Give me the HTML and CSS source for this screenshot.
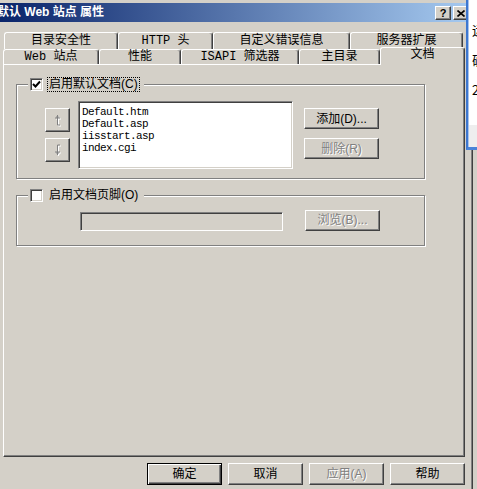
FILE: index.html
```html
<html>
    <head>
        <title>默认 Web 站点 属性</title>
        <link rel="stylesheet" href="styles.css">
    </head>
    <body>
        <div class="top-strip"></div>

        <div class="dialog">
            <div class="titlebar">
                <span class="title">默认 Web 站点 属性</span>
                <div class="caption-btns">
                    <span class="cap-btn">?</span>
                    <span class="cap-btn">
                        <svg width="8" height="7" viewBox="0 0 8 7"><path d="M0.5 0.5 L7.5 6.5 M7.5 0.5 L0.5 6.5" stroke="#000" stroke-width="1.6"/></svg>
                    </span>
                </div>
            </div>

            <div class="tabs">
                <div class="tab-row back">
                    <div class="tab w1">目录安全性</div>
                    <div class="tab w2">HTTP 头</div>
                    <div class="tab w3">自定义错误信息</div>
                    <div class="tab w4">服务器扩展</div>
                </div>
                <div class="tab-row front">
                    <div class="tab w5">Web 站点</div>
                    <div class="tab w6">性能</div>
                    <div class="tab w7">ISAPI 筛选器</div>
                    <div class="tab w8">主目录</div>
                    <div class="tab selected">文档</div>
                </div>
            </div>

            <div class="panel">
                <div class="group g1">
                    <div class="legend">
                        <span class="check">
                            <svg width="9" height="9" viewBox="0 0 9 9"><path d="M1 4 L3.5 6.5 L8 1.5" fill="none" stroke="#000" stroke-width="2"/></svg>
                        </span>
                        <span class="focus">启用默认文档(C)</span>
                    </div>
                    <div class="g1-body">
                        <div class="arrows">
                            <button class="btn arrow">
                                <svg width="9" height="13" viewBox="0 0 9 13">
                                    <path d="M4.5 1 V11 H7 M2 4 H7 M3 3 H6" fill="none" stroke="#fff" stroke-width="1" transform="translate(1 1)"/>
                                    <path d="M4.5 1 V11 H7 M2 4 H7 M3 3 H6" fill="none" stroke="#808080" stroke-width="1"/>
                                </svg>
                            </button>
                            <button class="btn arrow">
                                <svg width="9" height="13" viewBox="0 0 9 13">
                                    <path d="M4.5 11 V1 H7 M2 8 H7 M3 9 H6" fill="none" stroke="#fff" stroke-width="1" transform="translate(1 1)"/>
                                    <path d="M4.5 11 V1 H7 M2 8 H7 M3 9 H6" fill="none" stroke="#808080" stroke-width="1"/>
                                </svg>
                            </button>
                        </div>
                        <div class="listbox">
                            <div class="item">Default.htm</div>
                            <div class="item">Default.asp</div>
                            <div class="item">iisstart.asp</div>
                            <div class="item">index.cgi</div>
                        </div>
                        <div class="side-btns">
                            <button class="btn">添加(D)...</button>
                            <button class="btn disabled">删除(R)</button>
                        </div>
                    </div>
                </div>

                <div class="group g2">
                    <div class="legend">
                        <span class="check"></span>
                        <span class="label">启用文档页脚(O)</span>
                    </div>
                    <div class="g2-body">
                        <div class="textfield"></div>
                        <button class="btn disabled">浏览(B)...</button>
                    </div>
                </div>
            </div>

            <div class="footer">
                <button class="btn default">确定</button>
                <button class="btn">取消</button>
                <button class="btn disabled">应用(A)</button>
                <button class="btn">帮助</button>
            </div>
        </div>

        <div class="other-win">
            <div class="other-body">
                <div class="other-line">运</div>
                <div class="other-line">确</div>
                <div class="other-line">2</div>
            </div>
            <div class="other-bar"></div>
        </div>
    </body>
</html>
```

FILE: styles.css
```css
body {
    margin: 0;
    background-color: #d4d0c8;
    font-family: "Liberation Sans", "Noto Sans CJK SC", sans-serif;
    font-size: 12px;
    color: #000;
    position: relative;
    overflow: hidden;
    height: 489px;
}

.top-strip {
    height: 3px;
    background-color: #d4d0c8;
    border-bottom: 0;
}

.dialog {
    width: 473px;
    box-sizing: border-box;
    border-right: 1px solid #404040;
    box-shadow: inset -1px 0 #808080;
    height: 486px;
}

.titlebar {
    height: 19px;
    width: 470px;
    display: flex;
    align-items: center;
    justify-content: space-between;
    background: linear-gradient(to right, #0a246a, #a6caf0);
    padding-right: 1px;
    box-sizing: border-box;
}

.title {
    color: #fff;
    font-weight: bold;
    font-size: 12px;
    margin-left: -3px;
    white-space: nowrap;
    line-height: 19px;
}

.caption-btns {
    display: flex;
    gap: 2px;
    margin-top: 1px;
}

.cap-btn {
    width: 16px;
    height: 14px;
    box-sizing: border-box;
    background-color: #d4d0c8;
    border: 1px solid;
    border-color: #fff #404040 #404040 #fff;
    box-shadow: inset -1px -1px #808080;
    display: flex;
    align-items: center;
    justify-content: center;
    font-weight: bold;
    font-size: 11px;
    line-height: 12px;
}

.tabs {
    margin-top: 10px;
    margin-left: 3px;
    height: 32px;
}

.tab-row {
    display: flex;
}

.tab-row.back {
    height: 17px;
    margin-left: 1px;
}

.tab-row.front {
    height: 15px;
    align-items: flex-end;
}

.tab {
    box-sizing: border-box;
    background-color: #d4d0c8;
    border-top: 1px solid #fff;
    border-left: 1px solid #fff;
    border-right: 1px solid #404040;
    box-shadow: inset -1px 0 #808080;
    border-radius: 3px 3px 0 0;
    text-align: center;
    font-family: "Liberation Mono", "Noto Sans CJK SC", monospace;
    font-size: 12px;
    white-space: nowrap;
}

.back .tab {
    height: 17px;
    line-height: 16px;
}

.front .tab {
    height: 15px;
    line-height: 15px;
}

.w1 { width: 114px; }
.w2 { width: 95px; }
.w3 { width: 137px; }
.w4 { width: 113px; }
.w5 { width: 96px; }
.w6 { width: 82px; }
.w7 { width: 118px; }
.w8 { width: 81px; }

.front .tab.selected {
    width: 85px;
    height: 18px;
    line-height: 15px;
    margin-bottom: -1px;
    position: relative;
    z-index: 1;
    border-bottom: 0;
}

.panel {
    margin-left: 3px;
    width: 462px;
    height: 393px;
    box-sizing: border-box;
    border: 1px solid;
    border-color: #fff #404040 #404040 #fff;
    box-shadow: inset -1px -1px #808080;
    padding: 19px 0 0 12px;
}

.group {
    width: 409px;
    box-sizing: border-box;
    border: 1px solid #808080;
    box-shadow: inset 1px 1px #fff, 1px 1px #fff;
}

.g1 {
    height: 95px;
}

.g2 {
    height: 51px;
    margin-top: 16px;
}

.legend {
    display: inline-flex;
    align-items: center;
    height: 15px;
    margin-top: -8px;
    margin-left: 11px;
    padding: 0 4px 0 2px;
    background-color: #d4d0c8;
    vertical-align: top;
}

.check {
    width: 13px;
    height: 13px;
    box-sizing: border-box;
    background-color: #fff;
    border: 1px solid;
    border-color: #808080 #fff #fff #808080;
    box-shadow: inset 1px 1px #404040, inset -1px -1px #d4d0c8;
    display: flex;
    align-items: center;
    justify-content: center;
}

.focus,
.label {
    margin-left: 4px;
    padding: 0 1px;
    line-height: 13px;
    border: 1px dotted #000;
    white-space: nowrap;
}

.label {
    border-color: transparent;
}

.g1-body {
    display: flex;
    margin-top: 9px;
}

.arrows {
    display: flex;
    flex-direction: column;
    gap: 6px;
    margin-left: 28px;
    margin-top: 7px;
}

.btn {
    box-sizing: border-box;
    background-color: #d4d0c8;
    border: 1px solid;
    border-color: #fff #404040 #404040 #fff;
    box-shadow: inset -1px -1px #808080;
    font-family: "Liberation Sans", "Noto Sans CJK SC", sans-serif;
    font-size: 12px;
    color: #000;
    padding: 0;
    width: 75px;
    height: 21px;
    line-height: 18px;
    border-radius: 0;
    white-space: nowrap;
}

.btn.arrow {
    width: 25px;
    height: 24px;
    display: flex;
    align-items: center;
    justify-content: center;
}

.btn.disabled {
    color: #808080;
    text-shadow: 1px 1px #fff;
}

.listbox {
    width: 215px;
    height: 68px;
    margin-left: 8px;
    box-sizing: border-box;
    background-color: #fff;
    border: 1px solid;
    border-color: #808080 #fff #fff #808080;
    box-shadow: inset 1px 1px #404040, inset -1px -1px #d4d0c8;
    padding: 4px 0 0 3px;
}

.item {
    font-family: "Liberation Mono", monospace;
    font-size: 11px;
    letter-spacing: -0.6px;
    line-height: 12px;
    height: 12px;
}

.side-btns {
    display: flex;
    flex-direction: column;
    gap: 9px;
    margin-left: 11px;
    margin-top: 7px;
}

.g2-body {
    display: flex;
    align-items: center;
    margin-top: 9px;
}

.textfield {
    width: 203px;
    height: 19px;
    margin-left: 63px;
    box-sizing: border-box;
    border: 1px solid;
    border-color: #808080 #fff #fff #808080;
    box-shadow: inset 1px 1px #404040, inset -1px -1px #d4d0c8;
}

.g2-body .btn {
    margin-left: 22px;
    margin-top: -3px;
}

.footer {
    display: flex;
    gap: 6px;
    margin-top: 6px;
    margin-left: 147px;
}

.footer .btn {
    height: 22px;
    line-height: 19px;
}

.btn.default {
    border: 1px solid #000;
    box-shadow: inset 1px 1px #fff, inset -1px -1px #404040, inset -2px -2px #808080;
}

.other-win {
    position: absolute;
    left: 466px;
    top: 0;
    width: 11px;
    height: 150px;
    box-sizing: border-box;
    border-left: 2px solid #3d77d0;
    border-bottom: 3px solid #4a84d8;
    box-shadow: inset 1px 0 #a7c3ee;
    display: flex;
    flex-direction: column;
    overflow: hidden;
}

.other-body {
    flex: 1;
    background-color: #fff;
    margin-left: 1px;
    padding: 22px 0 0 3px;
}

.other-line {
    font-family: "Noto Sans CJK SC", sans-serif;
    font-size: 13px;
    line-height: 16px;
    height: 30px;
    white-space: nowrap;
}

.other-bar {
    height: 22px;
    margin-left: 1px;
    background-color: #eeeeee;
}
```
